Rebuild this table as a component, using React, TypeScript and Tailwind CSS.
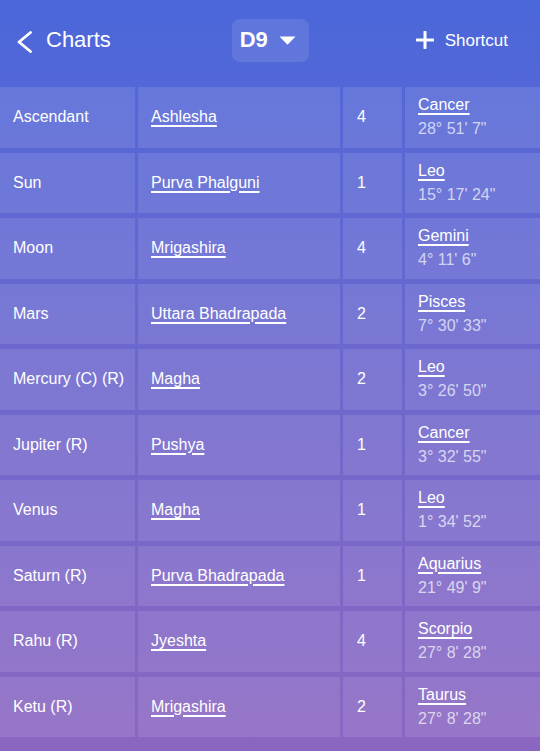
import React from 'react';

type Row = {
  planet: string;
  nakshatra: string;
  pada: number;
  sign: string;
  degree: string;
};

const rows: Row[] = [
  { planet: 'Ascendant', nakshatra: 'Ashlesha', pada: 4, sign: 'Cancer', degree: `28° 51' 7"` },
  { planet: 'Sun', nakshatra: 'Purva Phalguni', pada: 1, sign: 'Leo', degree: `15° 17' 24"` },
  { planet: 'Moon', nakshatra: 'Mrigashira', pada: 4, sign: 'Gemini', degree: `4° 11' 6"` },
  { planet: 'Mars', nakshatra: 'Uttara Bhadrapada', pada: 2, sign: 'Pisces', degree: `7° 30' 33"` },
  { planet: 'Mercury (C) (R)', nakshatra: 'Magha', pada: 2, sign: 'Leo', degree: `3° 26' 50"` },
  { planet: 'Jupiter (R)', nakshatra: 'Pushya', pada: 1, sign: 'Cancer', degree: `3° 32' 55"` },
  { planet: 'Venus', nakshatra: 'Magha', pada: 1, sign: 'Leo', degree: `1° 34' 52"` },
  { planet: 'Saturn (R)', nakshatra: 'Purva Bhadrapada', pada: 1, sign: 'Aquarius', degree: `21° 49' 9"` },
  { planet: 'Rahu (R)', nakshatra: 'Jyeshta', pada: 4, sign: 'Scorpio', degree: `27° 8' 28"` },
  { planet: 'Ketu (R)', nakshatra: 'Mrigashira', pada: 2, sign: 'Taurus', degree: `27° 8' 28"` },
];

const Header: React.FC = () => (
  <div className="flex items-center justify-between h-[87px] pb-[7px] pl-[16px] pr-[32px] text-white">
    <div className="flex items-center gap-[13px]">
      <svg width="17" height="22" viewBox="0 0 17 22" className="mt-[4px]">
        <path d="M14.5 1.5 L3 11 L14.5 20.5" fill="none" stroke="white" strokeWidth="2.8" strokeLinecap="round" strokeLinejoin="round" />
      </svg>
      <span className="text-[22px] leading-none">Charts</span>
    </div>
    <button className="flex items-center gap-[11px] h-[43px] w-[77px] rounded-[8px] bg-white/10 pl-[8px] ml-[14px]">
      <span className="text-[22px] font-bold leading-none">D9</span>
      <svg width="17" height="9" viewBox="0 0 17 9">
        <path d="M0.5 0.5 H16.5 L8.5 8.8 Z" fill="white" />
      </svg>
    </button>
    <div className="flex items-center gap-[11px]">
      <svg width="18" height="18" viewBox="0 0 18 18">
        <path d="M9 1 V17 M1 9 H17" stroke="white" strokeWidth="3" strokeLinecap="round" />
      </svg>
      <span className="text-[17px] leading-none">Shortcut</span>
    </div>
  </div>
);

export default function App() {
  return (
    <div
      className="h-[751px] w-full overflow-hidden bg-gradient-to-b from-[#4a67da] to-[#8b66c1] text-white"
      style={{ fontFamily: '"Liberation Sans", Arial, sans-serif' }}
    >
      <Header />
      <div className="flex flex-col gap-[5px]">
        {rows.map(row => (
          <div
            key={row.planet}
            className="grid grid-cols-[135px_202px_59px_1fr] gap-x-[3px] h-[60.5px] text-[16px]"
          >
            <div className="flex items-center bg-white/[0.11] pl-[13px]">{row.planet}</div>
            <div className="flex items-center bg-white/[0.11] pl-[13px]">
              <span className="underline underline-offset-[3px] decoration-[1.5px]">{row.nakshatra}</span>
            </div>
            <div className="flex items-center bg-white/[0.11] pl-[14px]">{row.pada}</div>
            <div className="flex flex-col justify-center bg-white/[0.11] pl-[13px]">
              <span className="underline underline-offset-[3px] decoration-[1.5px] leading-[24px]">{row.sign}</span>
              <span className="text-white/70 leading-[24px]">{row.degree}</span>
            </div>
          </div>
        ))}
      </div>
    </div>
  );
}
